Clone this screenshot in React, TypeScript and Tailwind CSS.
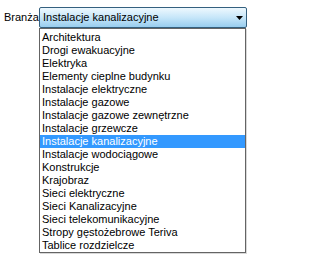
import React from "react";

const items = [
  "Architektura",
  "Drogi ewakuacyjne",
  "Elektryka",
  "Elementy cieplne budynku",
  "Instalacje elektryczne",
  "Instalacje gazowe",
  "Instalacje gazowe zewnętrzne",
  "Instalacje grzewcze",
  "Instalacje kanalizacyjne",
  "Instalacje wodociągowe",
  "Konstrukcje",
  "Krajobraz",
  "Sieci elektryczne",
  "Sieci Kanalizacyjne",
  "Sieci telekomunikacyjne",
  "Stropy gęstożebrowe Teriva",
  "Tablice rozdzielcze",
];

export default function App() {
  const selected = "Instalacje kanalizacyjne";
  return (
    <div
      className="w-[250px] h-[266px] bg-white text-[11px] text-black overflow-hidden"
      style={{ fontFamily: '"Liberation Sans", Arial, sans-serif' }}
    >
      <div className="flex pt-[7px] pl-[4px]">
        <div className="w-[35px] h-[21px] flex items-center leading-none">Branża</div>
        <div className="flex flex-col">
          <div className="w-[208px] h-[21px] border border-[#34607f] rounded-[2px] bg-gradient-to-b from-[#eef8fe] via-[#c6e6f9] to-[#98cdee] flex items-center pl-[3px] pr-[3px]">
            <span className="flex-1 leading-none">{selected}</span>
            <svg width="7" height="4" viewBox="0 0 7 4">
              <polygon points="0,0 7,0 3.5,4" fill="#000" />
            </svg>
          </div>
          <div className="w-[207px] pt-[2px] border border-[#646464] bg-white shadow-[1px_1px_0_#d8d8d8]">
            {items.map((it) => (
              <div
                key={it}
                className={
                  "h-[13px] pl-[2px] leading-[13px] whitespace-nowrap " +
                  (it === selected ? "bg-[#3399ff] text-white" : "")
                }
              >
                {it}
              </div>
            ))}
          </div>
        </div>
      </div>
    </div>
  );
}
